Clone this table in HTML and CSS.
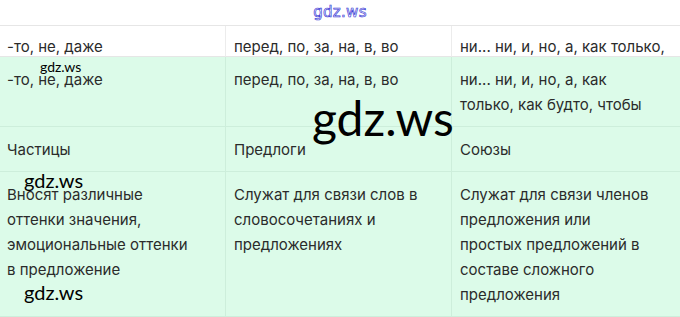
FILE: index.html
```html
<!DOCTYPE html>
<html lang="ru">
<head>
<meta charset="utf-8">
<link rel="stylesheet" href="styles.css">
</head>
<body>
<div class="page">
  <div class="site">gdz.ws</div>
  <div class="grid">
    <div class="cell top">-то, не, даже</div>
    <div class="cell top">перед, по, за, на, в, во</div>
    <div class="cell top">ни... ни, и, но, а, как только,</div>

    <div class="cell">-то, не, даже</div>
    <div class="cell">перед, по, за, на, в, во</div>
    <div class="cell">ни... ни, и, но, а, как<br>только, как будто, чтобы</div>

    <div class="cell">Частицы</div>
    <div class="cell">Предлоги</div>
    <div class="cell">Союзы</div>

    <div class="cell">Вносят различные<br>оттенки значения,<br>эмоциональные оттенки<br>в предложение</div>
    <div class="cell">Служат для связи слов в<br>словосочетаниях и<br>предложениях</div>
    <div class="cell">Служат для связи членов<br>предложения или<br>простых предложений в<br>составе сложного<br>предложения</div>
  </div>
  <span class="wm wm-small">gdz.ws</span>
  <span class="wm wm-big">gdz.ws</span>
  <span class="wm wm-left">gdz.ws</span>
  <span class="wm wm-bottom">gdz.ws</span>
</div>
</body>
</html>
```
FILE: styles.css
```css
html, body {
  margin: 0;
  padding: 0;
  background: #ffffff;
}
.page {
  position: relative;
  width: 680px;
  height: 317px;
  overflow: hidden;
  font-family: Inter, "Noto Sans", sans-serif;
  color: #2b2b2b;
}
.site {
  height: 25px;
  box-sizing: border-box;
  text-align: center;
  font-family: "DejaVu Sans", sans-serif;
  font-size: 15px;
  line-height: 24px;
  color: #ffffff;
  -webkit-text-stroke: 0.7px #3a3ad6;
  letter-spacing: 0.3px;
}
.grid {
  display: grid;
  grid-template-columns: 226px 226px 228px;
  background: #dcfbe9;
  border-top: 1px solid #e6e6e6;
}
.cell {
  font-size: 15px;
  line-height: 25px;
  padding: 10px 8px 9px 7px;
  border-right: 1px solid #cdeedb;
  border-bottom: 1px solid #cdeedb;
}
.cell:nth-child(3n) {
  border-right: none;
}
.cell:nth-child(3n+2), .cell:nth-child(3n) {
  padding-left: 8px;
}
.cell.top {
  background: #ffffff;
  padding-top: 8px;
  padding-bottom: 0;
  height: 31px;
  box-sizing: border-box;
  border-right-color: #ececec;
  border-bottom-color: #e6e6e6;
}
.wm {
  position: absolute;
  font-family: Lato, "DejaVu Sans", sans-serif;
  color: #000;
  line-height: 1;
  white-space: nowrap;
}
.wm-small {
  left: 40px;
  top: 60px;
  font-size: 14px;
}
.wm-big {
  left: 312px;
  top: 94px;
  font-size: 48px;
}
.wm-left {
  left: 24px;
  top: 170px;
  font-size: 20px;
}
.wm-bottom {
  left: 24px;
  top: 282px;
  font-size: 20px;
}
```
